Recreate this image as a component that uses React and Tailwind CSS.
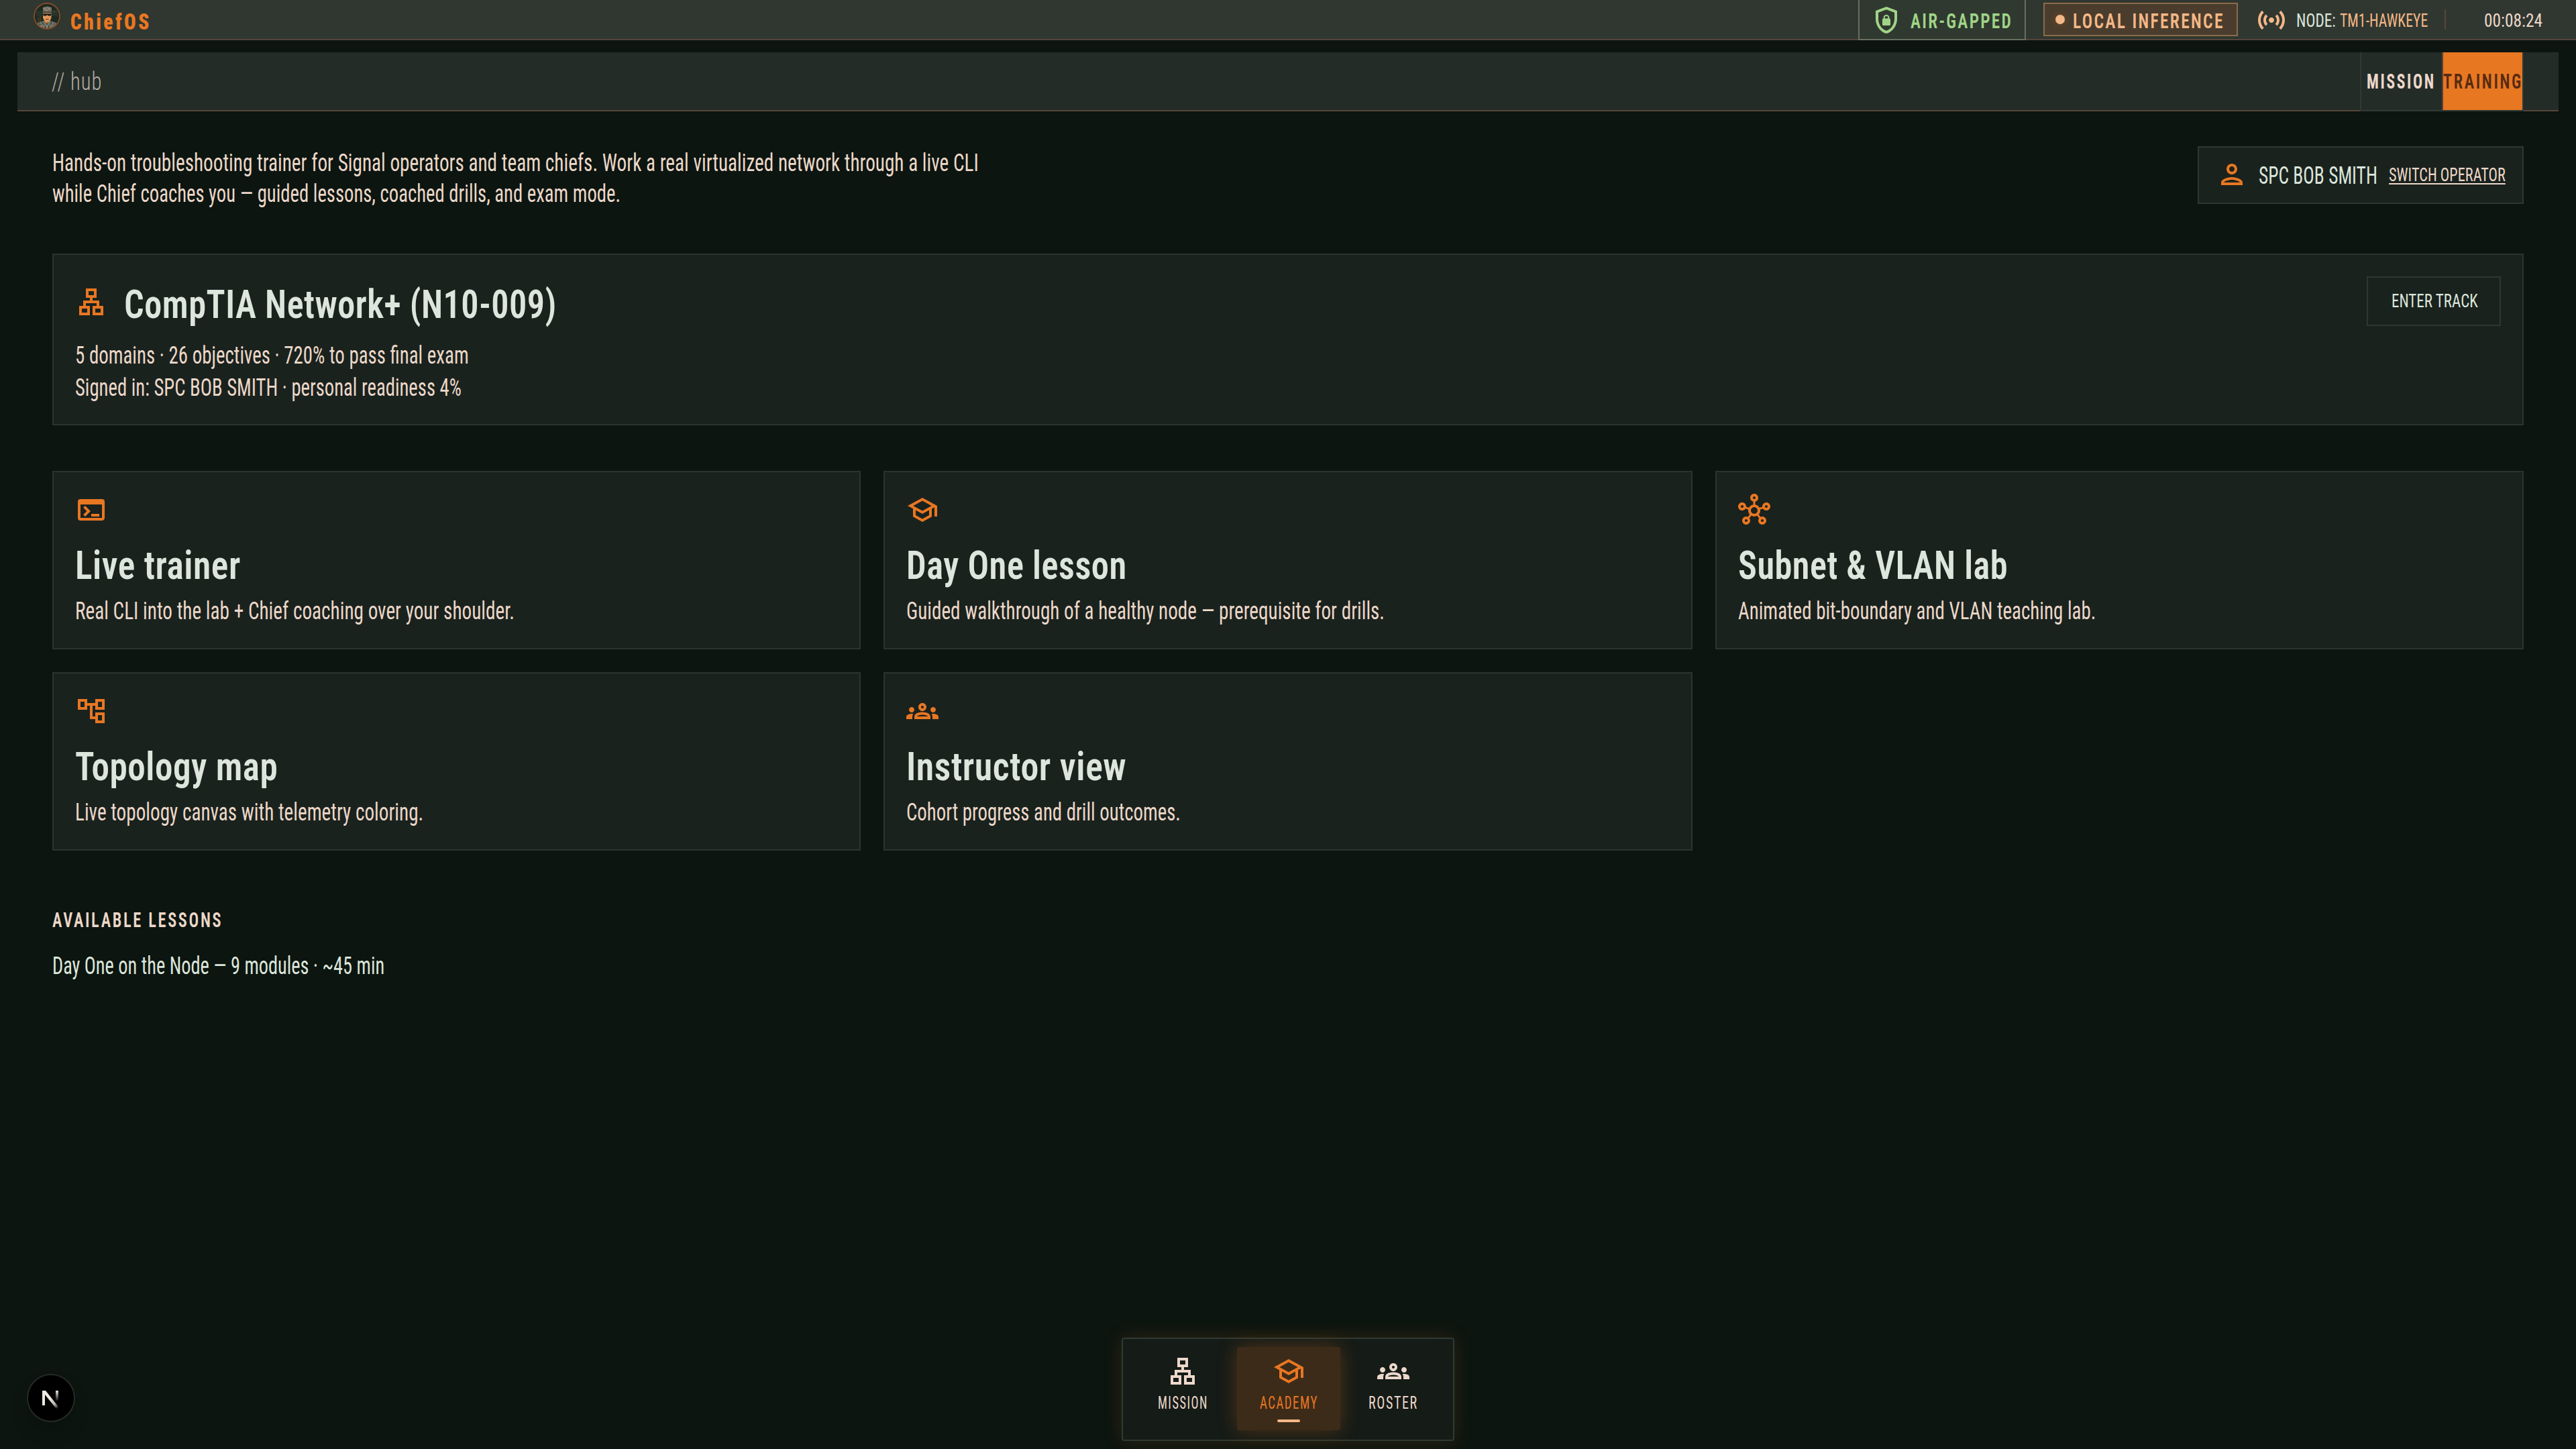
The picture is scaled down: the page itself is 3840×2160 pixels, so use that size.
import { useLayoutEffect, useRef, useState } from 'react';
import clsx from 'clsx';
import {
  MdOutlineAccountTree,
  MdOutlineGroups,
  MdOutlineHub,
  MdOutlineLan,
  MdOutlinePerson,
  MdOutlineSchool,
  MdOutlineTerminal,
  MdSensors,
} from 'react-icons/md';

const TOOLS = [
  { icon: MdOutlineTerminal, title: 'Live trainer', tw: 247, desc: 'Real CLI into the lab + Chief coaching over your shoulder.', dw: 655 },
  { icon: MdOutlineSchool, title: 'Day One lesson', tw: 329, desc: 'Guided walkthrough of a healthy node — prerequisite for drills.', dw: 713 },
  { icon: MdOutlineHub, title: 'Subnet & VLAN lab', tw: 402, desc: 'Animated bit-boundary and VLAN teaching lab.', dw: 533 },
  { icon: MdOutlineAccountTree, title: 'Topology map', tw: 302, desc: 'Live topology canvas with telemetry coloring.', dw: 519 },
  { icon: MdOutlineGroups, title: 'Instructor view', tw: 328, desc: 'Cohort progress and drill outcomes.', dw: 409 },
];

// One line of condensed text, squeezed to a fixed width
function Fit({ w, className, children }) {
  const ref = useRef(null);
  const [scale, setScale] = useState(1);

  useLayoutEffect(() => {
    setScale(w / ref.current.offsetWidth);
  }, [w]);

  return (
    <span className={clsx('block shrink-0', className)} style={{ width: w }}>
      <span
        ref={ref}
        className="block w-max origin-left whitespace-nowrap"
        style={{ transform: `scaleX(${scale})` }}
      >
        {children}
      </span>
    </span>
  );
}

function Avatar() {
  return (
    <svg viewBox="0 0 40 40" className="mt-1 size-10 shrink-0">
      <defs>
        <clipPath id="avatar">
          <circle cx="20" cy="20" r="19" />
        </clipPath>
      </defs>
      <g clipPath="url(#avatar)">
        <rect width="40" height="40" fill="#1c2a22" />
        <path d="M4 12h9v8H4zM27 11h9v9h-9z" fill="#26342b" />
        <path d="M7 22v8M10 20v9M31 12v3M34 13v1" stroke="#6f4a2b" strokeWidth="1" />
        <path d="M16 23h8v8h-8z" fill="#b4683a" />
        <path d="M3 40v-8l6-3 7-2 4 6 4-6 7 2 6 3v8z" fill="#6f7468" />
        <path d="M8 31l3 3M13 29l2 4M27 29l-2 4M31 31l-2 4M17 35l2 3M23 34l-1 4" stroke="#3a4339" strokeWidth="1.6" />
        <path d="M10 34l2 2M29 33l3 3M20 34v4" stroke="#a9a392" strokeWidth="1" />
        <path d="M14 14h12.500v9l-3 5.500h-6.500l-3-5.500z" fill="#e0975a" />
        <path d="M18 24h4.500v1.200H18z" fill="#7b4326" />
        <path d="M14 7l6-1.500L27 7v6.500H14z" fill="#757063" />
        <path d="M15 8l3 2M21 7l3 3M18 11l3 1" stroke="#a7967c" strokeWidth="1.200" />
        <path d="M13 13.200h14.500l-1 2.300H14z" fill="#4a4a40" />
        <path d="M14 16.500h12.500l-.8 3h-4l-1.400-1.500-1.500 1.500h-4z" fill="#121713" />
      </g>
      <circle cx="20" cy="20" r="19" fill="none" stroke="#874a28" strokeWidth="1.800" />
    </svg>
  );
}

function ShieldLock() {
  return (
    <svg viewBox="0 0 24 24" fill="currentColor" className="mt-1.5 size-12 shrink-0">
      <path d="M12 2 4 5v6.090c0 5.050 3.410 9.760 8 10.910 4.590-1.150 8-5.860 8-10.910V5l-8-3zm6 9.090c0 4-2.550 7.700-6 8.830-3.450-1.130-6-4.820-6-8.830v-4.700l6-2.250 6 2.250v4.700z" />
      <path d="M14.200 10.800V10.200a2.200 2.200 0 0 0-4.400 0v.6A.8.8 0 0 0 9 11.600v3.600c0 .45.350.8.800.8h4.400c.45 0 .8-.35.800-.8v-3.600a.8.8 0 0 0-.8-.8zm-3.400-.6a1.200 1.200 0 0 1 2.400 0v.6h-2.400z" />
    </svg>
  );
}

function StatusBar() {
  return (
    <header className="flex h-[60px] items-start border-b-2 border-[#56443a] bg-[#2f3730] pl-[50px] pr-[50px]">
      <Avatar />
      <Fit w={121} className="ml-[15px] text-[34px] font-black leading-[65px] tracking-[0.12em] text-[#e87722]">
        ChiefOS
      </Fit>

      <div className="ml-auto flex items-start">
        <div className="flex h-[60px] w-[250px] border-x-2 border-b-2 border-[#676f62] bg-[#303930] pl-4 text-[#a0d487]">
          <ShieldLock />
          <Fit w={152} className="ml-3 text-[32px] font-semibold leading-[62px] tracking-[0.09em]">AIR-GAPPED</Fit>
        </div>

        <div className="ml-[26px] mt-1 flex h-[50px] w-[290px] border-2 border-[#8a6b4a] bg-[#4a3d2d] pl-4 text-[#f4b787]">
          <span className="mt-4 size-3.5 rounded-full bg-[#f4b787] shadow-[0_0_12px_rgba(232,119,34,0.25)]" />
          <Fit w={226} className="ml-[12px] text-[32px] font-semibold leading-[50px] tracking-[0.09em]">LOCAL INFERENCE</Fit>
        </div>

        <MdSensors className="ml-[26px] mt-1.5 size-12 text-[#f4b787]" />
        <Fit w={59} className="ml-[13px] text-[28px] leading-[61px] text-[#dde6dc]">NODE:</Fit>
        <Fit w={131} className="ml-[6px] text-[28px] leading-[61px] text-[#f4b787]">TM1-HAWKEYE</Fit>
        <span className="ml-[25px] mt-3.5 h-[30px] w-0.5 bg-[#5a4538]" />
        <Fit w={87} className="ml-[57px] text-[28px] leading-[61px] text-[#ecd8c9]">00:08:24</Fit>
      </div>
    </header>
  );
}

function SubNav() {
  return (
    <nav className="mx-[26px] mt-[18px] flex h-[88px] bg-[#242c28]">
      <div className="flex-1 border-b-2 border-[#56443a] pl-[51px]">
        <Fit w={75} className="text-[36px] font-light leading-[88px] tracking-[0.03em] text-[#b5afa5]">// hub</Fit>
      </div>
      <div className="flex border-x-2 border-b-2 border-[#2f3a33] text-[32px] font-bold leading-[86px]">
        <div className="w-[122px] border-r-2 border-[#56443a] pl-2 text-[#ecd8cb]">
          <Fit w={103} className="tracking-[0.11em]">MISSION</Fit>
        </div>
        <div className="w-[118px] bg-[#e87722] font-semibold text-[#562a11]">
          <Fit w={119} className="tracking-[0.11em]">TRAINING</Fit>
        </div>
      </div>
      <div className="w-[52px] border-b-2 border-[#56443a]" />
    </nav>
  );
}

function OperatorBox() {
  return (
    <div className="flex h-[86px] w-[486px] items-start border-2 border-[#2e3831] bg-[#1a221e] pl-[25px]">
      <MdOutlinePerson className="mt-4 size-12 text-[#e87722]" />
      <Fit w={177} className="ml-4 text-[36px] leading-[84px] text-[#dde6dc]">SPC BOB SMITH</Fit>
      <Fit w={174} className="ml-[17px] text-[28px] leading-[81px] text-[#ecd8c9] underline decoration-2 underline-offset-[3px]">
        SWITCH OPERATOR
      </Fit>
    </div>
  );
}

function TrackCard() {
  return (
    <section className="mt-[66px] flex h-[256px] justify-between border-2 border-[#2b352e] bg-[#1a221e] p-8">
      <div>
        <div className="flex items-start">
          <MdOutlineLan className="mt-3.5 size-12 text-[#e87722]" />
          <Fit w={645} className="ml-[25px] text-[60px] font-[650] leading-[83px] tracking-[0.01em] text-[#dde6dc]">
            CompTIA Network+ (N10-009)
          </Fit>
        </div>
        <div className="mt-[11px] text-[36px] leading-[48px] text-[#ecd8c9]">
          <Fit w={587}>5 domains · 26 objectives · 720% to pass final exam</Fit>
          <Fit w={576}>Signed in: SPC BOB SMITH · personal readiness 4%</Fit>
        </div>
      </div>
      <button className="flex h-[74px] w-[200px] items-start border-2 border-[#2e3831] pl-[35px] text-[28px] leading-[70px] text-[#dde6dc]">
        <Fit w={129}>ENTER TRACK</Fit>
      </button>
    </section>
  );
}

function ToolCard({ icon: Icon, title, tw, desc, dw }) {
  return (
    <div className="h-[266px] border-2 border-[#2b352e] bg-[#1a221e] p-8">
      <Icon className="size-12 text-[#e87722]" />
      <Fit w={tw} className="mt-[23px] text-[60px] font-[650] leading-[72px] tracking-[0.01em] text-[#dde6dc]">{title}</Fit>
      <Fit w={dw} className="mt-[9px] text-[36px] leading-[46px] text-[#ecd8c9]">{desc}</Fit>
    </div>
  );
}

function DockItem({ icon: Icon, label, w, active, className }) {
  return (
    <div
      className={clsx(
        'flex h-[124px] flex-col items-center rounded-[4px] pt-3',
        active ? 'bg-[#3d2b19] text-[#e87722] shadow-[0_0_30px_rgba(232,119,34,0.28)]' : 'text-[#ecd8cb]',
        className,
      )}
    >
      <Icon className="size-12" />
      <Fit w={w} className="mt-[5px] text-[26px] leading-[36px] tracking-[0.08em]">{label}</Fit>
      {active && <span className="mt-[7px] h-1 w-[34px] rounded-full bg-[#f4b787]" />}
    </div>
  );
}

function Dock() {
  return (
    <div className="absolute left-[1672px] top-[1994px] flex h-[154px] w-[496px] gap-2 rounded-[4px] border-2 border-[#2f3a33] bg-[#151b17] pl-4 pt-3 shadow-[0_0_30px_rgba(232,119,34,0.16)]">
      <DockItem icon={MdOutlineLan} label="MISSION" w={75} className="w-[146px]" />
      <DockItem icon={MdOutlineSchool} label="ACADEMY" w={87} className="w-[154px]" active />
      <DockItem icon={MdOutlineGroups} label="ROSTER" w={74} className="w-[142px]" />
    </div>
  );
}

function DevBadge() {
  return (
    <div className="absolute left-10 top-[2048px] flex size-[72px] items-center justify-center rounded-full border-2 border-[#252b27] bg-black shadow-[0_16px_32px_-8px_rgba(0,0,0,0.24)]">
      <svg viewBox="0 0 26 32" className="h-8 w-[26px]">
        <defs>
          <linearGradient id="diag" x1="12" y1="17" x2="23" y2="31" gradientUnits="userSpaceOnUse">
            <stop stopColor="#efe9e2" />
            <stop offset="0.6" stopColor="#efe9e2" stopOpacity="0.75" />
            <stop offset="1" stopColor="#efe9e2" stopOpacity="0.1" />
          </linearGradient>
          <linearGradient id="stem" x1="0" y1="5" x2="0" y2="21" gradientUnits="userSpaceOnUse">
            <stop stopColor="#efe9e2" />
            <stop offset="1" stopColor="#efe9e2" stopOpacity="0" />
          </linearGradient>
        </defs>
        <path d="M0 5h5l19 24-3 3L4 11v16H0z" fill="url(#diag)" />
        <path d="M20 5h4v16h-4z" fill="url(#stem)" />
      </svg>
    </div>
  );
}

export default function App() {
  return (
    <div className="relative h-[2160px] w-[3840px] overflow-hidden bg-[#0c1510] font-['Roboto_Condensed',Roboto,sans-serif]">
      <StatusBar />
      <SubNav />

      <main className="px-[78px] pt-[52px]">
        <div className="flex items-start justify-between">
          <div className="pt-0.5 text-[36px] leading-[46px] text-[#ecd8c9]">
            <Fit w={1381}>
              Hands-on troubleshooting trainer for Signal operators and team chiefs. Work a real virtualized network through a live CLI
            </Fit>
            <Fit w={847}>while Chief coaches you — guided lessons, coached drills, and exam mode.</Fit>
          </div>
          <OperatorBox />
        </div>

        <TrackCard />

        <div className="mt-[68px] grid grid-cols-3 gap-[34px]">
          {TOOLS.map((t) => (
            <ToolCard key={t.title} {...t} />
          ))}
        </div>

        <h2 className="mt-[79px]">
          <Fit w={254} className="text-[32px] font-semibold leading-[48px] tracking-[0.11em] text-[#ecd8c9]">AVAILABLE LESSONS</Fit>
        </h2>
        <Fit w={495} className="mt-[22px] text-[36px] leading-[46px] text-[#dde6dc]">
          Day One on the Node — 9 modules · ~45 min
        </Fit>
      </main>

      <Dock />
      <DevBadge />
    </div>
  );
}
